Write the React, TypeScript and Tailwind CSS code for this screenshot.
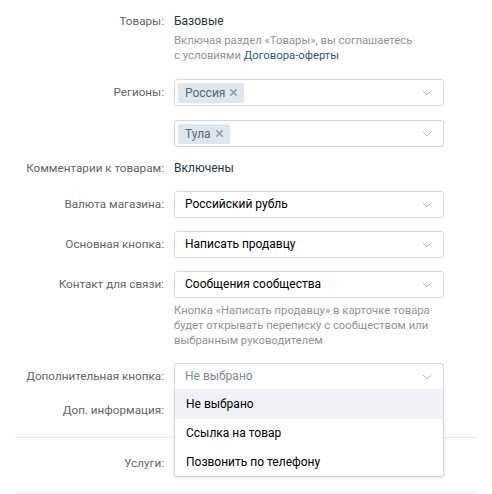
import { ChevronDown, X } from 'lucide-react'

function Label({ children, className = '' }: { children: React.ReactNode; className?: string }) {
  return (
    <div className={`w-[149px] shrink-0 text-right text-[#656565] leading-[15px] whitespace-nowrap text-[11.7px] ${className}`}>
      {children}
    </div>
  )
}

function Chip({ text }: { text: string }) {
  return (
    <span className="flex items-center h-[20px] pl-[7px] pr-[5px] rounded-[2px] bg-[#dfe6ee] text-[#55677d]">
      {text}
      <X className="w-[11px] h-[11px] ml-[3px] text-[#8a9bb0]" strokeWidth={3.4} />
    </span>
  )
}

function Select({ children, placeholder = false, open = false }: { children: React.ReactNode; placeholder?: boolean; open?: boolean }) {
  return (
    <div
      className={`flex items-center w-[270px] h-[27px] border border-[#d3d9de] bg-white pl-[10px] pr-[8px] ${
        open ? 'rounded-t-[3px] border-b-[#e7e8ec]' : 'rounded-[3px]'
      }`}
    >
      <div className={`flex-1 leading-[15px] ${placeholder ? 'text-[#7f8893]' : 'text-black'}`}>{children}</div>
      <ChevronDown className="w-[16px] h-[16px] text-[#aab4c0]" strokeWidth={1.4} />
    </div>
  )
}

function ChipSelect({ text }: { text: string }) {
  return (
    <div className="flex items-center w-[270px] h-[27px] border border-[#d3d9de] rounded-[3px] bg-white pl-[3px] pr-[8px]">
      <div className="flex-1 flex">
        <Chip text={text} />
      </div>
      <ChevronDown className="w-[16px] h-[16px] text-[#aab4c0]" strokeWidth={1.4} />
    </div>
  )
}

export default function App() {
  return (
    <div
      className="w-[492px] h-[494px] bg-white overflow-hidden text-[12px] px-[15px]"
      style={{ fontFamily: 'Roboto, "Open Sans", Arial, sans-serif' }}
    >
      {/* Товары */}
      <div className="flex gap-[10px] pt-[14px]">
        <Label>Товары:</Label>
        <div>
          <div className="text-[#2a3441] leading-[15px]">Базовые</div>
          <div className="mt-[4px] text-[#939393] leading-[15px] text-[11.3px]">
            Включая раздел «Товары», вы соглашаетесь
            <br />с условиями <span className="text-[#2a5885]">Договора-оферты</span>
          </div>
        </div>
      </div>

      {/* Регионы */}
      <div className="flex gap-[10px] mt-[16px] items-center">
        <Label>Регионы:</Label>
        <ChipSelect text="Россия" />
      </div>
      <div className="flex gap-[10px] mt-[14px] items-center">
        <div className="w-[149px] shrink-0" />
        <ChipSelect text="Тула" />
      </div>

      <div className="flex gap-[10px] mt-[14px]">
        <Label>Комментарии к товарам:</Label>
        <div className="text-[#2a3441] leading-[15px]">Включены</div>
      </div>

      <div className="flex gap-[10px] mt-[15px] items-center">
        <Label>Валюта магазина:</Label>
        <Select>Российский рубль</Select>
      </div>
      <div className="flex gap-[10px] mt-[13px] items-center">
        <Label>Основная кнопка:</Label>
        <Select>Написать продавцу</Select>
      </div>
      <div className="flex gap-[10px] mt-[13px] items-center">
        <Label>Контакт для связи:</Label>
        <Select>Сообщения сообщества</Select>
      </div>
      <div className="flex gap-[10px] mt-[5px]">
        <div className="w-[149px] shrink-0" />
        <div className="text-[#939393] leading-[15px] text-[11.3px]">
          Кнопка «Написать продавцу» в карточке товара
          <br />
          будет открывать переписку с сообществом или
          <br />
          выбранным руководителем
        </div>
      </div>

      <div className="flex gap-[10px] mt-[15px] items-center relative">
        <Label>Дополнительная кнопка:</Label>
        <div className="relative">
          <Select placeholder open>
            Не выбрано
          </Select>
          <div className="absolute left-0 top-[26px] z-10 w-[270px] bg-white border border-t-0 border-[#d3d9de] rounded-b-[3px] shadow-[0_1px_3px_rgba(0,0,0,0.12)] text-black">
            <div className="h-[30px] flex items-center pl-[11px] bg-[#f0f2f5]">Не выбрано</div>
            <div className="h-[28px] flex items-center pl-[11px]">Ссылка на товар</div>
            <div className="h-[29px] flex items-center pl-[11px]">Позвонить по телефону</div>
          </div>
        </div>
      </div>

      <div className="flex gap-[10px] mt-[13px]">
        <Label>Доп. информация:</Label>
      </div>

      <div className="mt-[19px] border-t border-[#e7e8ec]" />

      <div className="flex gap-[10px] mt-[18px]">
        <Label>Услуги:</Label>
      </div>

      <div className="mt-[21px] border-t border-[#e7e8ec]" />
    </div>
  )
}
